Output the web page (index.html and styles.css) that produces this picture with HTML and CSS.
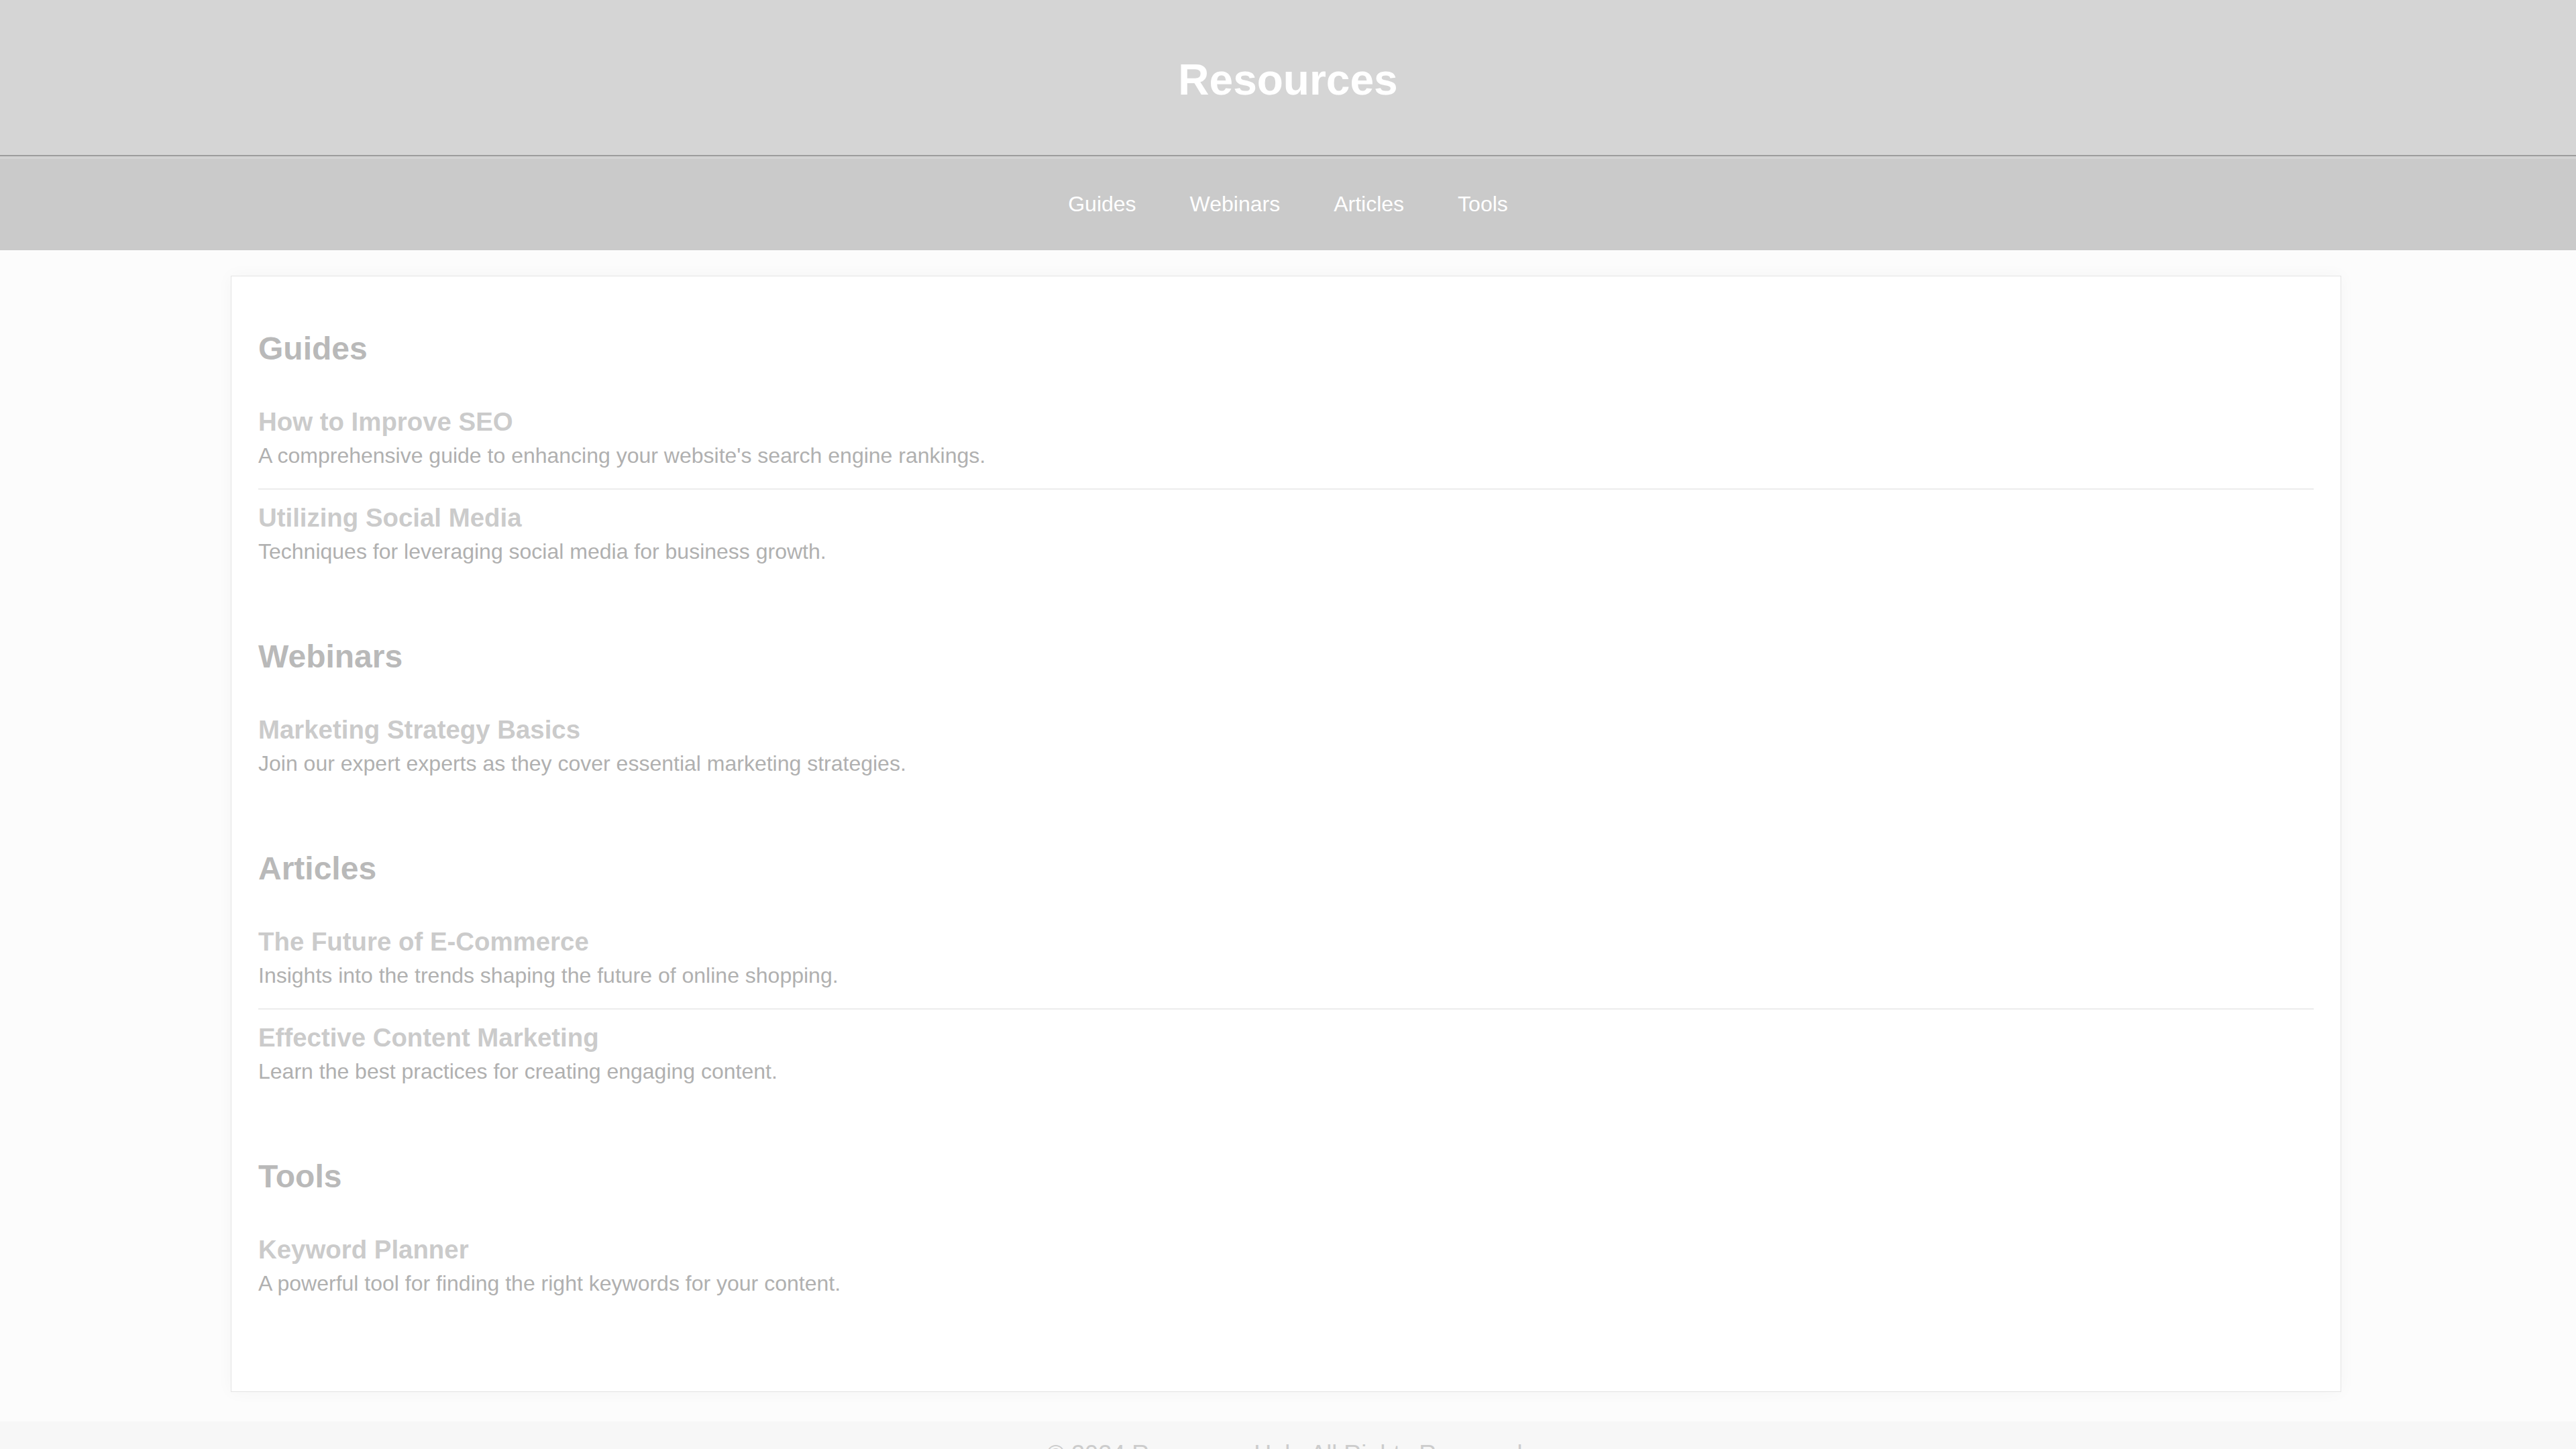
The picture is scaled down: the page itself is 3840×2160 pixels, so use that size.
FILE: index.html
```html
<!DOCTYPE html>
<html lang="en">
<head>
<meta charset="utf-8">
<title>Resources</title>
<link rel="stylesheet" href="styles.css">
</head>
<body>
<header class="site-header">
  <h1 class="site-title">Resources</h1>
</header>
<nav class="site-nav">
  <a class="nav-link" href="#guides">Guides</a>
  <a class="nav-link" href="#webinars">Webinars</a>
  <a class="nav-link" href="#articles">Articles</a>
  <a class="nav-link" href="#tools">Tools</a>
</nav>
<main class="card">
  <section class="section" id="guides">
    <h2 class="section-title">Guides</h2>
    <div class="item">
      <h3 class="item-title">How to Improve SEO</h3>
      <p class="item-desc">A comprehensive guide to enhancing your website's search engine rankings.</p>
    </div>
    <div class="item">
      <h3 class="item-title">Utilizing Social Media</h3>
      <p class="item-desc">Techniques for leveraging social media for business growth.</p>
    </div>
  </section>
  <section class="section" id="webinars">
    <h2 class="section-title">Webinars</h2>
    <div class="item">
      <h3 class="item-title">Marketing Strategy Basics</h3>
      <p class="item-desc">Join our expert experts as they cover essential marketing strategies.</p>
    </div>
  </section>
  <section class="section" id="articles">
    <h2 class="section-title">Articles</h2>
    <div class="item">
      <h3 class="item-title">The Future of E-Commerce</h3>
      <p class="item-desc">Insights into the trends shaping the future of online shopping.</p>
    </div>
    <div class="item">
      <h3 class="item-title">Effective Content Marketing</h3>
      <p class="item-desc">Learn the best practices for creating engaging content.</p>
    </div>
  </section>
  <section class="section" id="tools">
    <h2 class="section-title">Tools</h2>
    <div class="item">
      <h3 class="item-title">Keyword Planner</h3>
      <p class="item-desc">A powerful tool for finding the right keywords for your content.</p>
    </div>
  </section>
</main>
<footer class="site-footer">
  <p class="footer-text">&copy; 2024 Resources Hub. All Rights Reserved.</p>
</footer>
</body>
</html>
```

FILE: styles.css
```css
* {
  box-sizing: border-box;
}

html, body {
  margin: 0;
  padding: 0;
}

body {
  background: #fcfcfc;
  font-family: "Liberation Sans", Arial, Helvetica, sans-serif;
  font-size: 32px;
  color: #b0b0b0;
}

.site-header {
  background: #d5d5d5;
  padding: 82px 0 75px;
  text-align: center;
  border-bottom: 2px solid #9c9c9c;
}

.site-title {
  margin: 0;
  font-size: 64px;
  font-weight: bold;
  line-height: 74px;
  color: #ffffff;
}

.site-nav {
  background: #cacaca;
  border-top: 4px solid #d2d2d2;
  padding: 49px 0 50px;
  display: flex;
  justify-content: center;
  gap: 80px;
}

.nav-link {
  color: #ffffff;
  text-decoration: none;
  font-size: 32px;
  line-height: 37px;
}

.card {
  width: 3146px;
  margin: 38px auto 0 calc(50% - 1576px);
  background: #ffffff;
  border: 1px solid #e4e4e4;
  box-shadow: 0 0 24px rgba(0, 0, 0, 0.035);
  padding: 40px 40px 32px;
}

.section {
  margin-bottom: 80px;
}

.section-title {
  margin: 40px 0 40px;
  font-size: 48px;
  line-height: 55px;
  font-weight: bold;
  color: #b9b9b9;
}

.item {
  padding: 20px 0;
  border-bottom: 2px solid #ececec;
}

.item:last-child {
  border-bottom: none;
}

.item-title {
  margin: 0 0 10px;
  font-size: 38.4px;
  line-height: 44px;
  font-weight: bold;
  color: #cbcbcb;
}

.item-desc {
  margin: 0 0 10px;
  font-size: 32px;
  line-height: 37px;
  color: #b0b0b0;
}

.site-footer {
  margin-top: 44px;
  background: #f7f7f7;
  padding: 28px 0;
  text-align: center;
}

.footer-text {
  margin: 0;
  font-size: 36px;
  line-height: 41px;
  color: #cccccc;
}
```
